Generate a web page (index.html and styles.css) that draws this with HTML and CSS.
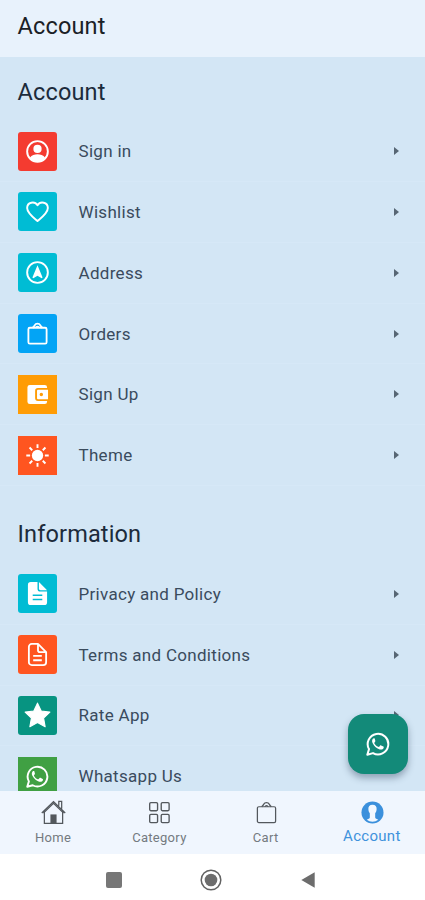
FILE: index.html
```html
<!DOCTYPE html>
<html lang="en">
<head>
<meta charset="utf-8">
<title>Account</title>
<link rel="stylesheet" href="styles.css">
</head>
<body>
<svg class="defs" aria-hidden="true">
  <symbol id="whatsapp" viewBox="0 0 24 24">
    <path fill="none" stroke="currentColor" stroke-width="2" stroke-linejoin="round" d="M1.3 22.7 3 17.1A10.3 10.3 0 1 1 7 21.1Z"/>
    <path fill="currentColor" d="M8.7 6.6c-.4-.6-1.300-.5-1.800.1-1.100 1.300-1 2.900-.2 4.500 1.600 3.100 4 5.200 7.100 6.200 1.600.5 3.300-.2 3.800-1.500.3-.8.200-1.200-.2-1.400l-2.300-1.100c-.5-.2-.8-.1-1.100.3l-.8 1c-.2.300-.6.300-1 .1-1.700-.7-2.900-1.900-3.800-3.400-.2-.4-.1-.6.100-.9l.7-.9c.2-.3.200-.5.100-.8z"/>
  </symbol>
  <symbol id="bag" viewBox="0 0 24 24">
    <g fill="none" stroke="currentColor"><rect x="2.500" y="6" width="19" height="16.500" rx="1.500"/><path d="M7 6c1-1 1.500-1.500 2-2.500a3.400 3.400 0 0 1 6 0c.5 1 1 1.500 2 2.500M10.300 6a1.800 1.800 0 0 1 3.400 0"/></g>
  </symbol>
</svg>
<header class="topbar">Account</header>
<main class="content">
  <section>
    <h2 class="heading">Account</h2>
    <ul class="list">
      <li class="row"><span class="tile red"><svg viewBox="0 0 24 24"><circle cx="12" cy="12" r="10.800" fill="none" stroke="currentColor" stroke-width="2"/><circle cx="12" cy="9.300" r="4.300" fill="currentColor"/><path fill="currentColor" d="M4 18.500c2-3 5-3.600 8-3.600s6 .6 8 3.600c-2 3-5 4.500-8 4.500s-6-1.500-8-4.500z"/></svg></span><span class="label">Sign in</span><i class="arrow"></i></li>
      <li class="row"><span class="tile cyan"><svg viewBox="0 0 24 24"><path fill="none" stroke="currentColor" stroke-width="2" stroke-linejoin="round" d="M12 22C8 18.500 1.200 13.500 1.200 8.300 1.200 2.200 9 .8 12 5.500c3-4.700 10.800-3.300 10.800 2.800C22.800 13.500 16 18.500 12 22z"/></svg></span><span class="label">Wishlist</span><i class="arrow"></i></li>
      <li class="row"><span class="tile cyan"><svg viewBox="0 0 24 24"><circle cx="12" cy="12" r="10.800" fill="none" stroke="currentColor" stroke-width="2"/><path fill="currentColor" d="m12 4.500 5.300 12.800-.9.700L12 15.500 7.600 18l-.9-.7z"/></svg></span><span class="label">Address</span><i class="arrow"></i></li>
      <li class="row"><span class="tile blue"><svg class="thick"><use href="#bag"/></svg></span><span class="label">Orders</span><i class="arrow"></i></li>
      <li class="row"><span class="tile amber square"><svg viewBox="0 0 24 24"><path fill="currentColor" d="M4 2h15.500A2.500 2.500 0 0 1 22 4.500v.8H12.500A3 3 0 0 0 9.500 8.300v7.400a3 3 0 0 0 3 3H22v.8a2.500 2.500 0 0 1-2.500 2.500H4a2.500 2.500 0 0 1-2.500-2.500v-15A2.500 2.500 0 0 1 4 2z"/><path fill="currentColor" fill-rule="evenodd" d="M12.500 7H23v10H12.500a1 1 0 0 1-1-1V8a1 1 0 0 1 1-1zM16 10.200a1.800 1.800 0 1 0 0 3.600 1.800 1.800 0 0 0 0-3.600z"/></svg></span><span class="label">Sign Up</span><i class="arrow"></i></li>
      <li class="row"><span class="tile orange square"><svg viewBox="0 0 24 24"><circle cx="12" cy="12" r="5.900" fill="currentColor"/><path stroke="currentColor" stroke-width="2" d="M12 .3v4M12 19.700v4M.3 12h4M19.700 12h4M3.700 3.700l2.800 2.800M17.500 17.500l2.800 2.800M20.300 3.700l-2.800 2.800M6.500 17.500l-2.800 2.800"/></svg></span><span class="label">Theme</span><i class="arrow"></i></li>
    </ul>
  </section>
  <section>
    <h2 class="heading second">Information</h2>
    <ul class="list">
      <li class="row"><span class="tile cyan"><svg viewBox="0 0 24 24"><path fill="currentColor" fill-rule="evenodd" d="M5 0h7v7a3 3 0 0 0 3 3h7v11a3 3 0 0 1-3 3H5a3 3 0 0 1-3-3V3a3 3 0 0 1 3-3zm2 13v1.500h10V13zm0 4.500V19h10v-1.500z"/><path fill="currentColor" d="M13.500 0 22 8.500h-7A1.500 1.500 0 0 1 13.500 7z"/></svg></span><span class="label">Privacy and Policy</span><i class="arrow"></i></li>
      <li class="row"><span class="tile orange"><svg viewBox="0 0 24 24"><path fill="none" stroke="currentColor" stroke-width="1.900" stroke-linejoin="round" d="M6 1h6.500L21 9.500V20a3 3 0 0 1-3 3H6a3 3 0 0 1-3-3V4a3 3 0 0 1 3-3zM12.500 1v6.500a2 2 0 0 0 2 2H21M7.500 13.500h9M7.500 18h9"/></svg></span><span class="label">Terms and Conditions</span><i class="arrow"></i></li>
      <li class="row"><span class="tile teal"><svg class="star" viewBox="0 0 24 24"><path fill="currentColor" stroke="currentColor" stroke-linejoin="round" d="m12 1 3.300 7 7.700 1-5.600 5.300 1.400 7.700L12 18.300 5.200 22l1.400-7.700L1 9l7.700-1z"/></svg></span><span class="label">Rate App</span><i class="arrow"></i></li>
      <li class="row"><span class="tile green square"><svg><use href="#whatsapp"/></svg></span><span class="label">Whatsapp Us</span></li>
    </ul>
  </section>
</main>
<button class="chat" aria-label="Chat"><svg><use href="#whatsapp"/></svg></button>
<nav class="tabs">
  <a class="tab"><svg viewBox="0 0 26 26"><g fill="none" stroke="currentColor" stroke-width="1.300"><path d="M.8 13.500 13 1.800l12.200 11.700M3.500 12v12.300h19V12M18.500 6V1.500h3V9"/><path d="M2.500 13.500 13 3.500l10.500 10"/></g><path fill="currentColor" d="M9.800 15h6.400v9.500H9.800z"/></svg><span>Home</span></a>
  <a class="tab"><svg viewBox="0 0 26 26"><g fill="none" stroke="currentColor" stroke-width="1.400"><rect x="2.800" y="2.700" width="8.200" height="8.500" rx="1.200"/><rect x="14.800" y="2.700" width="8.200" height="8.500" rx="1.200"/><rect x="2.800" y="15" width="8.200" height="8.500" rx="1.200"/><rect x="14.800" y="15" width="8.200" height="8.500" rx="1.200"/></g></svg><span>Category</span></a>
  <a class="tab"><svg class="cart"><use href="#bag"/></svg><span>Cart</span></a>
  <a class="tab active"><svg viewBox="0 0 24 24"><circle cx="12" cy="12" r="11.500" fill="currentColor"/><path fill="#f2f8ff" d="M12 3.800c-3 0-4.600 2-4.300 4.800.1 2 .8 3.300 1.500 4.200v4.400c0 1-2 1.500-3.200 2.300 3.400 2.700 8.600 2.700 12 0-1.200-.8-3.200-1.300-3.200-2.300v-4.400c.7-.9 1.400-2.200 1.500-4.200.3-2.800-1.300-4.800-4.300-4.800z"/></svg><span>Account</span></a>
</nav>
<footer class="system">
  <svg viewBox="0 0 16 16"><rect width="16" height="16" rx="2" fill="#777"/></svg>
  <svg class="home" viewBox="0 0 22 22"><circle cx="11" cy="11" r="9.800" fill="none" stroke="#626262" stroke-width="1.500"/><circle cx="11" cy="11" r="6.300" fill="#6c6c6c"/></svg>
  <svg viewBox="0 0 16 18"><path fill="#6c6c6c" d="M.5 9 15.500.2v17.600z"/></svg>
</footer>
</body>
</html>
```
FILE: styles.css
```css
* { box-sizing: border-box; }
body {
  margin: 0;
  height: 900px;
  display: flex;
  flex-direction: column;
  position: relative;
  overflow: hidden;
  font-family: Roboto, sans-serif;
  background: #d3e6f5;
}
svg { display: block; flex: none; }
.defs { position: absolute; width: 0; height: 0; }
.topbar {
  height: 56.500px;
  flex: none;
  padding: 0 17.500px;
  line-height: 53px;
  font-size: 23.500px;
  letter-spacing: .15px;
  color: #1b2126;
  background: #e8f2fc;
}
.content { flex: 1; min-height: 0; overflow: hidden; }
.heading {
  margin: 0;
  height: 64.600px;
  padding: 0 17.500px;
  line-height: 71px;
  font-size: 23.500px;
  font-weight: 400;
  letter-spacing: .15px;
  color: #1c2b3b;
}
.heading.second { height: 77.700px; line-height: 97px; }
.list { margin: 0; padding: 0; list-style: none; }
.row {
  height: 60.850px;
  padding: 0 26.500px 0 17.500px;
  display: flex;
  align-items: center;
  border-bottom: 1px solid #d6e8f7;
}
.tile {
  width: 39px;
  height: 39px;
  border-radius: 3px;
  display: flex;
  align-items: center;
  justify-content: center;
  color: #fff;
}
.tile svg { width: 23px; height: 23px; }
.tile svg.star { width: 27px; height: 27px; }
.thick { stroke-width: 1.900; }
.square { border-radius: 0; }
.red { background: #f43b30; }
.cyan { background: #00bcd4; }
.blue { background: #03a4f5; }
.amber { background: #ff9c05; }
.orange { background: #ff5520; }
.teal { background: #079481; }
.green { background: #40a043; }
.label {
  flex: 1;
  margin-left: 22px;
  font-size: 17px;
  letter-spacing: .3px;
  color: #3a4b5d;
}
.arrow {
  border-left: 5px solid #576674;
  border-top: 4.500px solid transparent;
  border-bottom: 4.500px solid transparent;
}
.chat {
  position: absolute;
  left: 348px;
  top: 714px;
  width: 60px;
  height: 60px;
  padding: 0;
  border: 0;
  border-radius: 16px;
  display: flex;
  align-items: center;
  justify-content: center;
  color: #fff;
  background: #138a79;
  box-shadow: 0 4px 7px rgba(40, 60, 85, .4);
}
.chat svg { width: 24px; height: 24px; }
.tabs {
  height: 63px;
  flex: none;
  display: grid;
  grid-template-columns: repeat(4, 1fr);
  background: #f0f6fe;
}
.tab {
  display: flex;
  flex-direction: column;
  align-items: center;
  padding-top: 9px;
  font-size: 13px;
  line-height: 16px;
  letter-spacing: .3px;
  color: #747a80;
}
.tab svg { width: 25px; height: 25px; margin-bottom: 5px; color: #53585d; }
.tab svg.cart { width: 23px; height: 23px; margin: 1px 0 6px 2px; stroke-width: 1.300; }
.tab.active { font-size: 15px; color: #3f92dc; }
.tab.active svg { width: 23px; height: 23px; margin: 1px 0 4px 1px; color: #3b90dc; }
.system {
  height: 46px;
  flex: none;
  display: flex;
  align-items: center;
  justify-content: center;
  gap: 78px;
  padding: 6px 3px 0 0;
  background: #fff;
}
.system svg { width: 16px; height: 16px; }
.system svg.home { width: 22px; height: 22px; }
```
